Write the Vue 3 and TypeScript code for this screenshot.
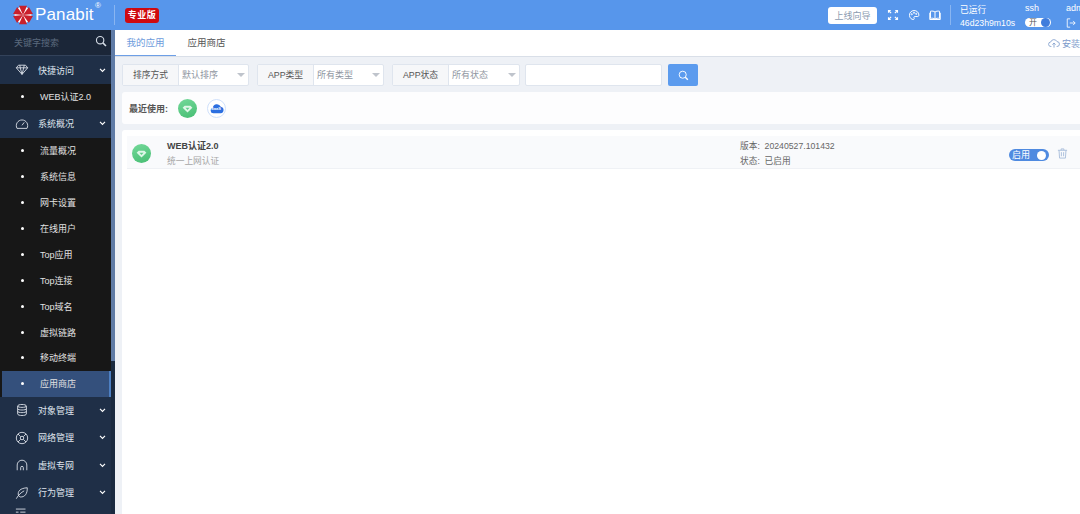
<script setup lang="ts">
interface SubItem {
  label: string
  active?: boolean
}

interface MenuGroup {
  label: string
  icon: string
  children: SubItem[]
}

const icons: Record<string, string> = {
  gem: 'M4 2.500h8l2.500 3L8 13 1.500 5.500zM1.500 5.500h13M6 5.500l2 7.500 2-7.500M5.500 2.500l.5 3M10.500 2.500l-.5 3',
  gauge: 'M2.300 13a6.500 6.500 0 1 1 11.400 0zM8 9.500l2.600-3.400',
  db: 'M3 3.500c0-2.400 10-2.400 10 0v9c0 2.400-10 2.400-10 0zM3 3.500c0 2 10 2 10 0M3 6.500c0 2 10 2 10 0M3 9.500c0 2 10 2 10 0',
  net: 'M8 1.500a6.500 6.500 0 1 1 0 13 6.500 6.500 0 0 1 0-13zM3.400 3.400l3 3M12.600 3.400l-3 3M3.400 12.600l3-3M12.600 12.600l-3-3M8 6a2 2 0 1 1 0 4 2 2 0 0 1 0-4z',
  arch: 'M2.500 14V8a5.500 5.500 0 0 1 11 0v6M6.500 14v-3a1.500 1.500 0 0 1 3 0v3',
  leaf: 'M4 11C2.500 6 6 2.500 14 2c.3 7-3 11-8 10.500zM1.500 14.500C4 10 7 7.500 10.500 5.500',
  list: 'M1 -4.500h11M1 -1h3M6 -1h6M1 2.500h11M1 6h11'
}

const menu: MenuGroup[] = [
  { label: '快捷访问', icon: 'gem', children: [{ label: 'WEB认证2.0' }] },
  {
    label: '系统概况',
    icon: 'gauge',
    children: [
      { label: '流量概况' },
      { label: '系统信息' },
      { label: '网卡设置' },
      { label: '在线用户' },
      { label: 'Top应用' },
      { label: 'Top连接' },
      { label: 'Top域名' },
      { label: '虚拟链路' },
      { label: '移动终端' },
      { label: '应用商店', active: true }
    ]
  },
  { label: '对象管理', icon: 'db', children: [] },
  { label: '网络管理', icon: 'net', children: [] },
  { label: '虚拟专网', icon: 'arch', children: [] },
  { label: '行为管理', icon: 'leaf', children: [] },
  { label: '', icon: 'list', children: [] }
]

const filters = [
  { label: '排序方式', value: '默认排序' },
  { label: 'APP类型', value: '所有类型' },
  { label: 'APP状态', value: '所有状态' }
]

// umbrella wedges: six red panels around the centre, white shows between them
const wedges = [0, 60, 120, 180, 240, 300].map((deg) => {
  const at = (a: number) => {
    const r = ((a - 90) * Math.PI) / 180
    return `${(10 + 10 * Math.cos(r)).toFixed(2)} ${(10 + 10 * Math.sin(r)).toFixed(2)}`
  }
  return `M10 10L${at(deg - 24)}L${at(deg + 24)}Z`
})
</script>

<template>
  <div class="page">
    <header class="topbar">
      <div class="logo">
        <svg class="logo-mark" viewBox="0 0 20 20">
          <circle cx="10" cy="10" r="8.500" fill="#fff" />
          <path v-for="d in wedges" :key="d" :d="d" fill="#c9202b" />
        </svg>
        <span class="logo-text">Panabit</span>
        <sup class="logo-reg">®</sup>
      </div>
      <span class="top-sep"></span>
      <span class="edition">专业版</span>

      <div class="top-right">
        <button class="guide">上线向导</button>
        <svg class="top-icon" viewBox="0 0 16 16" fill="none" stroke="#fff" stroke-width="1.500">
          <path d="M2 5V2h3M14 5V2h-3M2 11v3h3M14 11v3h-3M3 3l2.500 2.500M13 3l-2.500 2.500M3 13l2.500-2.500M13 13l-2.500-2.500" />
        </svg>
        <svg class="top-icon" viewBox="0 0 16 16" fill="none" stroke="#fff" stroke-width="1.300">
          <path d="M8 2a6.500 6 0 0 0-6 6.500C2 12 5 14 7 14c1.500 0 1.500-1.200 1-2-.5-1 0-2 1.500-2H13c1 0 1.500-.8 1.500-2C14.500 4.500 11.500 2 8 2z" />
          <circle cx="5" cy="7" r=".8" />
          <circle cx="8" cy="5" r=".8" />
          <circle cx="11" cy="6.500" r=".8" />
        </svg>
        <svg class="top-icon" viewBox="0 0 16 16" fill="none" stroke="#fff" stroke-width="1.300">
          <path d="M8 4C6.500 2.800 4 2.500 2 3v9.500c2-.5 4.500-.2 6 1 1.500-1.200 4-1.500 6-1V3c-2-.5-4.500-.2-6 1zM8 4v9.500M1 5v9h14V5" />
        </svg>
        <span class="top-sep right"></span>
        <div class="uptime">
          <span>已运行</span>
          <span>46d23h9m10s</span>
        </div>
        <div class="ssh">
          <span>ssh</span>
          <span class="ssh-switch">开<i></i></span>
        </div>
        <div class="admin">
          <span>admin</span>
          <svg viewBox="0 0 12 12" fill="none" stroke="#fff" stroke-width="1">
            <path d="M5 1H1.500v10H5M4.500 6H11M8.500 3.500 11 6 8.500 8.500" />
          </svg>
        </div>
      </div>
    </header>

    <div class="body">
      <aside class="sidebar">
        <div class="side-main">
          <div class="side-search">
            <span>关键字搜索</span>
            <svg viewBox="0 0 14 14" fill="none" stroke="#d5dce6" stroke-width="1.300">
              <circle cx="6" cy="6" r="4.300" />
              <path d="m9.200 9.200 3.600 3.600" stroke-width="1.800" />
            </svg>
          </div>
          <template v-for="group in menu" :key="group.label">
            <div class="group-head" :class="{ plain: !group.children.length }">
              <svg class="group-icon" viewBox="0 0 16 16" fill="none" stroke="#dfe4ec" stroke-width="1">
                <path :d="icons[group.icon]" />
              </svg>
              <span>{{ group.label }}</span>
              <svg v-if="group.label" class="chevron" viewBox="0 0 8 6" fill="none" stroke="#fff" stroke-width="1.400">
                <path d="m1 1 3 3 3-3" />
              </svg>
            </div>
            <div v-if="group.children.length" class="group-body">
              <div
                v-for="item in group.children"
                :key="item.label"
                class="sub-item"
                :class="{ active: item.active }"
              >
                <i class="dot"></i>
                <span>{{ item.label }}</span>
              </div>
            </div>
          </template>
        </div>
        <div class="side-track"><div class="side-thumb"></div></div>
      </aside>

      <main class="content">
        <nav class="tabs">
          <a class="tab current">我的应用</a>
          <a class="tab">应用商店</a>
          <span class="install">
            <svg viewBox="0 0 16 14" fill="none" stroke="#7d9ccb" stroke-width="1.100">
              <path d="M4.500 11H4a3 3 0 0 1-.4-6A4.500 4.500 0 0 1 12 4.500a3.200 3.200 0 0 1 0 6.500h-.5M8 12.500V6.500M5.800 8.500 8 6.300l2.200 2.200" />
            </svg>
            安装应用
          </span>
        </nav>

        <div class="main-area">
          <div class="filter-row">
            <div v-for="f in filters" :key="f.label" class="filter">
              <span class="filter-label">{{ f.label }}</span>
              <span class="filter-value">{{ f.value }}<i class="caret"></i></span>
            </div>
            <div class="filter-input"></div>
            <button class="search-btn">
              <svg viewBox="0 0 14 14" fill="none" stroke="#fff" stroke-width="1.200">
                <circle cx="6" cy="6" r="4.500" />
                <path d="m9.300 9.300 3.200 3.200" stroke-width="1.700" />
              </svg>
            </button>
          </div>

          <section class="recent">
            <span class="recent-label">最近使用:</span>
            <span class="app-icon">
              <svg viewBox="0 0 16 16"><path d="M4.500 4.500h7l2.500 2.500-6 6-6-6z" fill="#dff7e8" /><path d="M5.500 7h5L8 9.800z" fill="#5fcf8a" /></svg>
            </span>
            <span class="saas-icon">
              <svg viewBox="0 0 16 12">
                <path d="M3.800 11.500a3.300 3.300 0 0 1-.6-6.500A4.800 4.800 0 0 1 12.300 4a3.800 3.800 0 0 1 0 7.500z" fill="#2c6fe0" />
              </svg>
              <em>SaaS</em>
            </span>
          </section>

          <section class="list">
            <div class="app-row">
              <span class="app-icon">
                <svg viewBox="0 0 16 16"><path d="M4.500 4.500h7l2.500 2.500-6 6-6-6z" fill="#dff7e8" /><path d="M5.500 7h5L8 9.800z" fill="#5fcf8a" /></svg>
              </span>
              <div class="app-name">
                <strong>WEB认证2.0</strong>
                <span>统一上网认证</span>
              </div>
              <div class="app-meta">
                <span>版本:&nbsp;&nbsp;20240527.101432</span>
                <span>状态:&nbsp;&nbsp;已启用</span>
              </div>
              <span class="app-switch">启用<i></i></span>
              <svg class="trash" viewBox="0 0 12 12" fill="none" stroke="#a9bddb" stroke-width="1">
                <path d="M1 2.500h10M4.500 2.500V1h3v1.500M2.200 2.500l.6 8.500h6.400l.6-8.500M4.800 4.500v4.500M7.200 4.500v4.500" />
              </svg>
            </div>
          </section>
        </div>
      </main>
    </div>
  </div>
</template>

<style>
html,
body {
  margin: 0;
  overflow: hidden;
}
</style>

<style scoped>
.page {
  width: 1080px;
  height: 514px;
  overflow: hidden;
  display: flex;
  flex-direction: column;
  font-family: "Liberation Sans", "Noto Sans CJK SC", sans-serif;
  font-size: 9px;
  color: #444;
}

.topbar {
  flex: 0 0 30px;
  height: 30px;
  background: #5796eb;
  display: flex;
  align-items: center;
  color: #fff;
}

.logo {
  display: flex;
  align-items: center;
  margin-left: 13px;
  width: 101px;
  position: relative;
}

.logo-mark {
  width: 20px;
  height: 20px;
  flex: none;
}

.logo-text {
  font-size: 17px;
  letter-spacing: 0.15px;
  margin-left: 2px;
}

.logo-reg {
  position: absolute;
  left: 82px;
  top: -3px;
  font-size: 8px;
  margin: 0;
  line-height: 1;
}

.top-sep {
  width: 1px;
  height: 20px;
  background: rgba(255, 255, 255, 0.3);
}

.top-sep.right {
  margin-left: 9px;
}

.edition {
  margin-left: 10px;
  background: #cf0a10;
  border-radius: 3px;
  width: 34px;
  height: 15px;
  line-height: 15px;
  text-align: center;
  font-size: 9px;
  letter-spacing: 0.5px;
  font-weight: 700;
  white-space: nowrap;
}

.top-right {
  margin-left: auto;
  margin-right: -33px;
  display: flex;
  align-items: center;
  flex: none;
}

.guide {
  width: 49px;
  height: 17px;
  border: 0;
  padding: 0;
  border-radius: 3px;
  background: #fff;
  color: #8b9bb0;
  font: inherit;
  margin-right: 10px;
}

.top-icon {
  width: 12px;
  height: 12px;
  margin-right: 9px;
}

.top-icon:nth-of-type(3) {
  margin-right: 0;
}

.uptime {
  display: flex;
  flex-direction: column;
  line-height: 13px;
  margin-left: 9px;
  margin-top: 3px;
  width: 65px;
  font-size: 8.700px;
  white-space: nowrap;
}

.ssh {
  display: flex;
  flex-direction: column;
  align-items: flex-start;
  margin-top: -2px;
  width: 41px;
  line-height: 12px;
}

.ssh-switch {
  margin-top: 4px;
  width: 26px;
  height: 9px;
  border-radius: 5px;
  background: #fff;
  color: #555;
  font-size: 8px;
  line-height: 9px;
  padding-left: 4px;
  box-sizing: border-box;
  position: relative;
}

.ssh-switch i {
  position: absolute;
  right: 1px;
  top: 0;
  width: 9px;
  height: 9px;
  border-radius: 50%;
  background: #3f7ddc;
}

.admin {
  display: flex;
  flex-direction: column;
  line-height: 12px;
  margin-top: -1px;
  width: 47px;
}

.admin svg {
  width: 10px;
  height: 10px;
  margin-top: 4px;
}

.body {
  flex: 1;
  min-height: 0;
  display: flex;
}

.sidebar {
  flex: 0 0 115px;
  display: flex;
  background: #1f2f47;
  overflow: hidden;
}

.side-main {
  width: 111px;
  flex: none;
}

.side-search {
  height: 25px;
  background: #1b2638;
  border-bottom: 1px solid #33425a;
  display: flex;
  align-items: center;
  justify-content: space-between;
  padding: 0 4px 0 14px;
  color: #5c6a7e;
}

.side-search svg {
  width: 12px;
  height: 12px;
  margin-top: -3px;
}

.group-head {
  height: 28px;
  display: flex;
  align-items: center;
  color: #dfe4ec;
}

.group-head.plain {
  height: 27.400px;
}

.group-icon {
  width: 14px;
  height: 14px;
  margin-left: 15px;
  flex: none;
  overflow: visible;
}

.group-head span {
  margin-left: 9px;
}

.chevron {
  width: 7px;
  height: 5px;
  margin-left: auto;
  margin-right: 5px;
}

.group-body {
  background: #171717;
}

.sub-item {
  height: 25.900px;
  display: flex;
  align-items: center;
  color: #e2e2e2;
  box-sizing: border-box;
  padding-left: 21px;
}

.sub-item .dot {
  width: 3px;
  height: 3px;
  border-radius: 50%;
  background: #fff;
  margin-right: 16px;
  flex: none;
}

.sub-item.active {
  background: #34507c;
  margin-left: 2px;
  padding-left: 19px;
  border-right: 2px solid #4d7fc2;
}

.side-track {
  width: 4px;
  background: #1a2a40;
}

.side-thumb {
  height: 331px;
  background: #5f7ba6;
}

.content {
  flex: 1;
  min-width: 0;
  display: flex;
  flex-direction: column;
  background: #eef1f6;
}

.tabs {
  height: 26px;
  flex: none;
  background: #fff;
  border-bottom: 1px solid #d9dfe8;
  display: flex;
  align-items: stretch;
  position: relative;
}

.tab {
  width: 61px;
  text-align: center;
  line-height: 26px;
  font-size: 9.500px;
  color: #555;
}

.tab.current {
  color: #6d9bdc;
  box-shadow: inset 0 -1px 0 #6d9fe6;
}

.install {
  margin-left: auto;
  margin-right: -18px;
  display: flex;
  align-items: center;
  color: #7d9ccb;
  white-space: nowrap;
}

.install svg {
  width: 12px;
  height: 11px;
  margin-right: 2px;
}

.main-area {
  flex: 1;
  min-height: 0;
  padding: 7px 0 0 7px;
  display: flex;
  flex-direction: column;
}

.filter-row {
  height: 22px;
  display: flex;
  gap: 8px;
}

.filter {
  display: flex;
  width: 127px;
  height: 22px;
  box-sizing: border-box;
  border: 1px solid #dfe5ee;
  border-radius: 2px;
  background: #fff;
}

.filter:nth-child(3) {
  width: 128px;
}

.filter-label {
  width: 55px;
  flex: none;
  background: #f6f7f9;
  border-right: 1px solid #dfe5ee;
  text-align: center;
  line-height: 20px;
  color: #555;
  font-size: 8.800px;
}

.filter-value {
  flex: 1;
  padding-left: 3px;
  line-height: 20px;
  color: #8f96a1;
  position: relative;
}

.caret {
  position: absolute;
  right: 3px;
  top: 8px;
  border: 4.500px solid transparent;
  border-top: 4px solid #bfc4cc;
  border-bottom: 0;
}

.filter-input {
  width: 137px;
  height: 22px;
  box-sizing: border-box;
  border: 1px solid #dfe5ee;
  border-radius: 2px;
  background: #fff;
  margin-left: -3px;
}

.search-btn {
  width: 30px;
  height: 22px;
  border: 0;
  padding: 0;
  border-radius: 2px;
  background: #5b9bee;
  margin-left: -2px;
  display: flex;
  align-items: center;
  justify-content: center;
}

.search-btn svg {
  width: 11px;
  height: 11px;
}

.recent {
  margin-top: 6px;
  height: 32px;
  flex: none;
  background: #fdfdfe;
  border-radius: 3px 0 0 3px;
  display: flex;
  align-items: center;
  padding-left: 7px;
}

.recent-label {
  width: 49px;
  font-weight: 700;
  color: #555;
}

.app-icon {
  width: 19px;
  height: 19px;
  border-radius: 50%;
  background: linear-gradient(160deg, #74d99a, #46bd72);
  display: inline-flex;
  align-items: center;
  justify-content: center;
  flex: none;
}

.app-icon svg {
  width: 13px;
  height: 13px;
}

.saas-icon {
  width: 19px;
  height: 19px;
  margin-left: 10px;
  border-radius: 50%;
  background: #fff;
  border: 1.500px solid #cfe0fb;
  box-sizing: border-box;
  position: relative;
  display: inline-flex;
  align-items: center;
  justify-content: center;
}

.saas-icon svg {
  width: 14px;
  height: 11px;
}

.saas-icon em {
  position: absolute;
  left: 2px;
  top: 6px;
  width: 12px;
  text-align: center;
  font-size: 4px;
  line-height: 5px;
  font-style: normal;
  font-weight: 700;
  color: #fff;
}

.list {
  margin-top: 6px;
  flex: 1;
  background: #fff;
  border-radius: 3px 0 0 0;
  padding: 6px 0 0 5px;
}

.app-row {
  height: 32px;
  background: #f9fafc;
  border-bottom: 1px solid #eff1f5;
  display: flex;
  align-items: center;
  position: relative;
}

.app-row > .app-icon {
  margin-left: 5px;
  margin-top: 3px;
}

.app-name {
  margin-left: 16px;
  width: 573px;
  display: flex;
  flex-direction: column;
  line-height: 15px;
  margin-top: 4px;
}

.app-name strong {
  color: #444;
}

.app-name span {
  color: #a6a6a6;
  font-size: 8.700px;
}

.app-meta {
  width: 269px;
  display: flex;
  flex-direction: column;
  line-height: 15px;
  margin-top: 3px;
  color: #666;
  font-size: 8.700px;
}

.app-switch {
  width: 40px;
  height: 12px;
  border-radius: 6px;
  background: #4f8ae0;
  color: #fff;
  line-height: 12px;
  padding-left: 3px;
  box-sizing: border-box;
  position: relative;
  margin-top: 6px;
}

.app-switch i {
  position: absolute;
  right: 3px;
  top: 1.500px;
  width: 9px;
  height: 9px;
  border-radius: 50%;
  background: #fff;
}

.trash {
  width: 11px;
  height: 11px;
  margin-left: 8px;
  margin-top: 2px;
}
</style>
